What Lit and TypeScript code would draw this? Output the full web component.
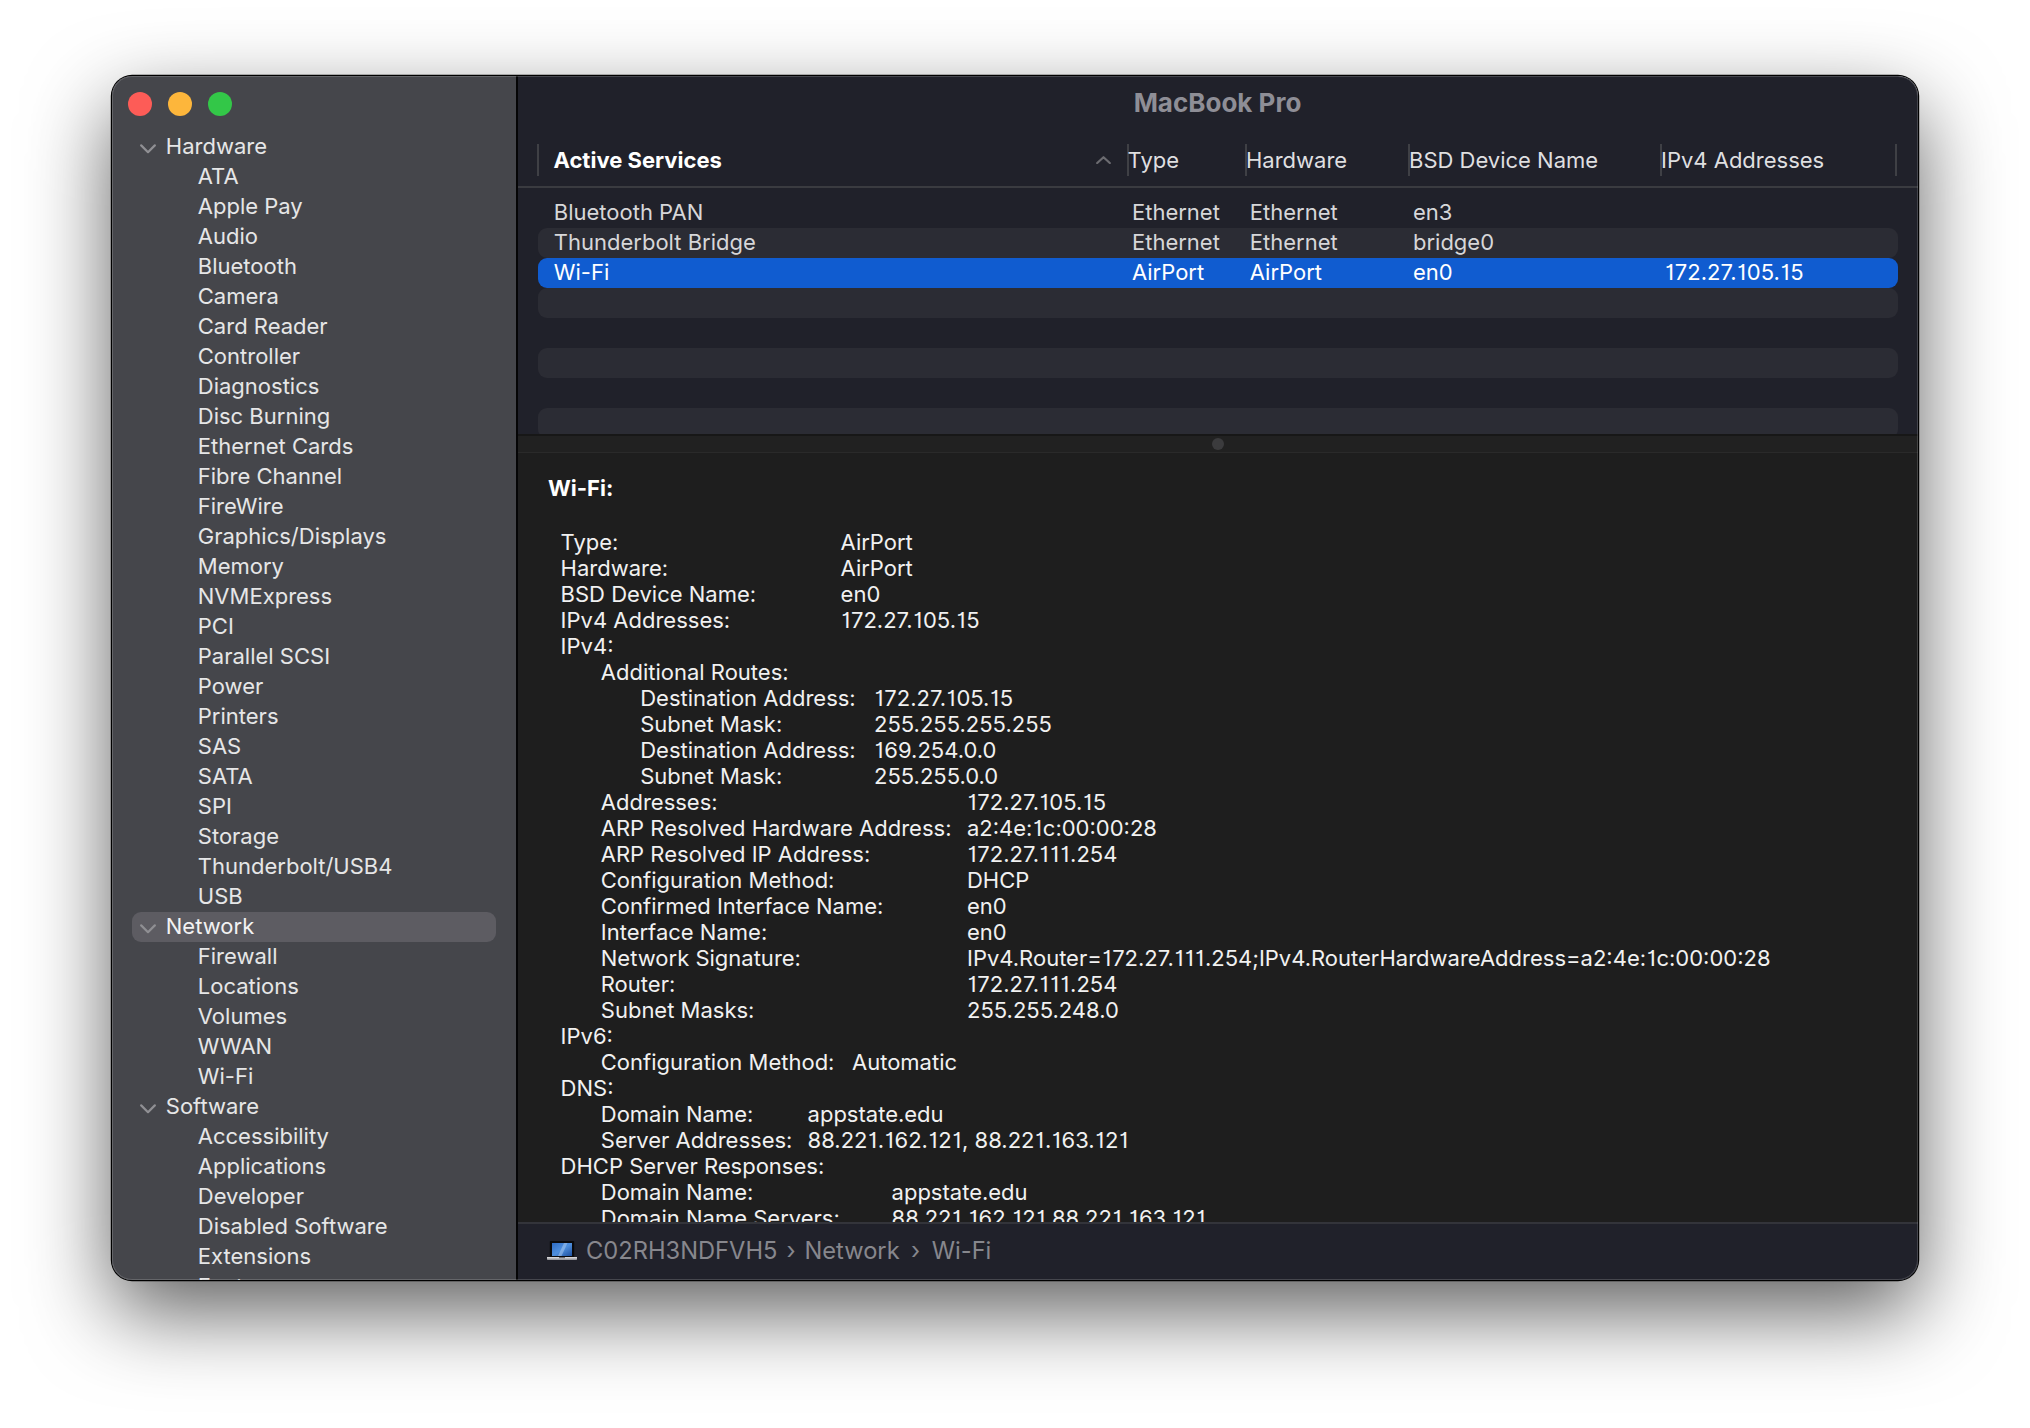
import { LitElement, html, css, svg } from "lit";
import { customElement } from "lit/decorators.js";

type Side = { t: string; h?: boolean; sel?: boolean };
const group = (t: string, items: string[], sel = false): Side[] => [
  { t, h: true, sel },
  ...items.map((x) => ({ t: x })),
];
const SIDEBAR: Side[] = [
  ...group("Hardware", ["ATA","Apple Pay","Audio","Bluetooth","Camera","Card Reader","Controller","Diagnostics","Disc Burning","Ethernet Cards","Fibre Channel","FireWire","Graphics/Displays","Memory","NVMExpress","PCI","Parallel SCSI","Power","Printers","SAS","SATA","SPI","Storage","Thunderbolt/USB4","USB"]),
  ...group("Network", ["Firewall","Locations","Volumes","WWAN","Wi-Fi"], true),
  ...group("Software", ["Accessibility","Applications","Developer","Disabled Software","Extensions","Fonts"]),
];

const HEAD = [
  { t: "Active Services", w: 589.6 },
  { t: "Type", w: 118.4 },
  { t: "Hardware", w: 163 },
  { t: "BSD Device Name", w: 252 },
  { t: "IPv4 Addresses", w: 237 },
];

const ROWS: { c: string[]; cls: string }[] = [
  { c: ["Bluetooth PAN", "Ethernet", "Ethernet", "en3", ""], cls: "" },
  { c: ["Thunderbolt Bridge", "Ethernet", "Ethernet", "bridge0", ""], cls: "stripe" },
  { c: ["Wi-Fi", "AirPort", "AirPort", "en0", "172.27.105.15"], cls: "selected" },
  { c: ["", "", "", "", ""], cls: "stripe" },
  { c: ["", "", "", "", ""], cls: "" },
  { c: ["", "", "", "", ""], cls: "stripe" },
  { c: ["", "", "", "", ""], cls: "" },
  { c: ["", "", "", "", ""], cls: "stripe" },
];

// Label column width = tab stop of the value, measured from the row's indent.
const INDENT = [0, 40.2, 79.6];
const D: [number, string, string, number][] = [
  [0, "Type:", "AirPort", 280],
  [0, "Hardware:", "AirPort", 280],
  [0, "BSD Device Name:", "en0", 280],
  [0, "IPv4 Addresses:", "172.27.105.15", 280],
  [0, "IPv4:", "", 0],
  [1, "Additional Routes:", "", 0],
  [2, "Destination Address:", "172.27.105.15", 313.4],
  [2, "Subnet Mask:", "255.255.255.255", 313.4],
  [2, "Destination Address:", "169.254.0.0", 313.4],
  [2, "Subnet Mask:", "255.255.0.0", 313.4],
  [1, "Addresses:", "172.27.105.15", 406.4],
  [1, "ARP Resolved Hardware Address:", "a2:4e:1c:00:00:28", 406.4],
  [1, "ARP Resolved IP Address:", "172.27.111.254", 406.4],
  [1, "Configuration Method:", "DHCP", 406.4],
  [1, "Confirmed Interface Name:", "en0", 406.4],
  [1, "Interface Name:", "en0", 406.4],
  [1, "Network Signature:", "IPv4.Router=172.27.111.254;IPv4.RouterHardwareAddress=a2:4e:1c:00:00:28", 406.4],
  [1, "Router:", "172.27.111.254", 406.4],
  [1, "Subnet Masks:", "255.255.248.0", 406.4],
  [0, "IPv6:", "", 0],
  [1, "Configuration Method:", "Automatic", 291.4],
  [0, "DNS:", "", 0],
  [1, "Domain Name:", "appstate.edu", 247],
  [1, "Server Addresses:", "88.221.162.121, 88.221.163.121", 247],
  [0, "DHCP Server Responses:", "", 0],
  [1, "Domain Name:", "appstate.edu", 331],
  [1, "Domain Name Servers:", "88.221.162.121,88.221.163.121", 331],
];

// The digit "1" is narrower here than in the reference's face: give it side room.
const withOnes = (s: string) =>
  s.split(/(1)/).map((p) => (p === "1" ? html`<span class="one">1</span>` : p));

const chevron = svg`<svg class="chev" viewBox="0 0 16 10" width="16" height="10"><path d="M1.2 1.4 8 8.2l6.8-6.8" fill="none" stroke="currentColor" stroke-width="2.2" stroke-linecap="round" stroke-linejoin="round"/></svg>`;
const caret = svg`<svg class="caret" viewBox="0 0 15 8" width="15" height="8"><path d="M1.2 7 7.5 1.2 13.8 7" fill="none" stroke="currentColor" stroke-width="2.2" stroke-linecap="round" stroke-linejoin="round"/></svg>`;
const laptop = svg`<svg class="laptop" viewBox="0 0 30 19" width="30" height="19">
  <defs>
    <linearGradient id="scr" x1="0" y1="0" x2="1" y2="1"><stop offset="0" stop-color="#2d6bc4"/><stop offset=".5" stop-color="#4f8fdc"/><stop offset="1" stop-color="#1d4f9e"/></linearGradient>
    <linearGradient id="base" x1="0" y1="0" x2="0" y2="1"><stop offset="0" stop-color="#e4e4e6"/><stop offset="1" stop-color="#8a8a8e"/></linearGradient>
  </defs>
  <path d="M3.6 0h22.8a.8.8 0 0 1 .8.8V16H2.8V.8a.8.8 0 0 1 .8-.8z" fill="#0a0a0c"/>
  <rect x="5" y="2" width="20" height="13" fill="url(#scr)"/>
  <path d="M11 15l6-13h3.5l-6 13z" fill="#a8c8ee" opacity=".55"/>
  <path d="M0 16h30v2.2a.8.8 0 0 1-.8.8H.8a.8.8 0 0 1-.8-.8z" fill="url(#base)"/>
  <rect x="12" y="16" width="6" height="1.2" fill="#6c6c70"/>
</svg>`;

@customElement("app-root")
export class AppRoot extends LitElement {
  static styles = css`
    :host {
      display: block;
      width: 2030px;
      height: 1428px;
      background: #fff;
      box-sizing: border-box;
      padding: 76px 112px 148px;
      font-family: Inter, "Liberation Sans", sans-serif;
      font-size: 22px;
      font-feature-settings: "cv01";
      overflow: hidden;
    }
    .window {
      position: relative;
      width: 1806px;
      height: 1204px;
      border-radius: 20px;
      overflow: hidden;
      display: flex;
      background: #20212a;
    }
    .frame-shadow {
      width: 1806px;
      height: 1204px;
      border-radius: 20px;
      box-shadow: 0 0 0 1.2px #000, 0 32px 84px rgba(0, 0, 0, 0.63);
    }
    .window::after {
      content: "";
      position: absolute;
      inset: 0;
      border-radius: 20px;
      border: 1.6px solid rgba(255, 255, 255, 0.17);
      pointer-events: none;
    }
    .one { padding: 0 0.8px; }
    /* sidebar */
    .sidebar {
      width: 404px;
      flex: none;
      background: #45464b;
      border-right: 2px solid #050506;
      overflow: hidden;
      color: #e6e6e7;
    }
    .lights {
      display: flex;
      gap: 16px;
      padding: 16px 0 16px 16px;
    }
    .light { width: 24px; height: 24px; border-radius: 50%; }
    .red { background: #fd5c57; }
    .yellow { background: #fdb63b; }
    .green { background: #33c748; }
    .side-row {
      height: 30px;
      line-height: 29px;
      margin: 0 20px;
      white-space: nowrap;
    }
    .side-row.item { padding-left: 65.8px; }
    .side-row.head {
      display: flex;
      align-items: center;
      padding-left: 8px;
      gap: 9.8px;
    }
    .side-row.head span { margin-bottom: 2px; }
    .side-row.sel { background: #5d5c62; border-radius: 9px; color: #f2f2f3; }
    .chev { color: #8f8f93; flex: none; margin-top: 3px; }

    /* main */
    .main { width: 1400px; flex: none; display: flex; flex-direction: column; }
    .title {
      height: 54px;
      line-height: 54px;
      text-align: center;
      font-size: 26px;
      font-weight: 700;
      color: #8e8e96;
      padding-right: 1px;
    }
    .table { height: 304px; overflow: hidden; display: flex; flex-direction: column; flex: none; }
    .thead {
      display: flex;
      padding: 14px 0 10px 19px;
      border-bottom: 2px solid #3a3b40;
      flex: none;
    }
    .th {
      height: 32px;
      line-height: 32px;
      box-sizing: border-box;
      border-left: 2px solid #3f4045;
      color: #dfdfe0;
      display: flex;
      justify-content: space-between;
      align-items: center;
      flex: none;
    }
    .th span { margin-left: -1px; }
    .th.first { padding-left: 15.5px; font-weight: 700; color: #fff; }
    .th.last { border-right: 2px solid #3f4045; }
    .caret { color: #6b6b70; margin-right: 16px; margin-top: -1px; }
    .tbody { padding: 10px 20px 0; }
    .tr {
      height: 30px;
      line-height: 29px;
      border-radius: 9px;
      display: grid;
      grid-template-columns: 578.2px 117.8px 163.2px 251.5px 1fr;
      padding-left: 15.8px;
      color: #d7d7d9;
    }
    .tr.stripe { background: #2b2c34; }
    .tr.selected { background: #105cd0; color: #fff; }

    .split {
      height: 19px;
      flex: none;
      box-sizing: border-box;
      background: #212121;
      border-top: 2px solid #171717;
      border-bottom: 1px solid #2a2a2a;
      display: flex;
      align-items: center;
      justify-content: center;
    }
    .dot { width: 12px; height: 12px; border-radius: 50%; background: #3b3b3d; }

    .detail {
      flex: 1;
      min-height: 0;
      overflow: hidden;
      background: #1e1e1e;
      color: #f1f1f1;
      padding: 22px 0 0 30px;
    }
    .detail h2 {
      margin: 0 0 28px;
      font: inherit;
      font-weight: 700;
      line-height: 26px;
      color: #fff;
    }
    .lines { padding-left: 12.6px; }
    .line { display: flex; height: 26px; line-height: 26px; white-space: nowrap; }
    .line span:first-child { flex: none; }

    .footer {
      height: 58px;
      flex: none;
      box-sizing: border-box;
      border-top: 2px solid #33343a;
      background: #20212a;
      display: flex;
      align-items: center;
      padding: 0 0 4px 29px;
      color: #87878d;
      white-space: nowrap;
      font-size: 23.7px;
    }
    .laptop { flex: none; margin-right: 9px; }
    .sep { width: 27px; text-align: center; }
    .sep.b { width: 32px; }
  `;

  render() {
    return html`
      <div class="frame-shadow">
        <div class="window">
          <div class="sidebar">
            <div class="lights">
              <div class="light red"></div>
              <div class="light yellow"></div>
              <div class="light green"></div>
            </div>
            ${SIDEBAR.map((s) =>
              s.h
                ? html`<div class="side-row head ${s.sel ? "sel" : ""}">${chevron}<span>${s.t}</span></div>`
                : html`<div class="side-row item">${s.t}</div>`
            )}
          </div>
          <div class="main">
            <div class="title">MacBook Pro</div>
            <div class="table">
              <div class="thead">
                ${HEAD.map(
                  (h, i) => html`<div
                    class="th ${i === 0 ? "first" : ""} ${i === 4 ? "last" : ""}"
                    style="width:${h.w}px"
                  >
                    <span>${h.t}</span>${i === 0 ? caret : ""}
                  </div>`
                )}
              </div>
              <div class="tbody">
                ${ROWS.map(
                  (r) => html`<div class="tr ${r.cls}">${r.c.map((c) => html`<span>${withOnes(c)}</span>`)}</div>`
                )}
              </div>
            </div>
            <div class="split"><div class="dot"></div></div>
            <div class="detail">
              <h2>Wi-Fi:</h2>
              <div class="lines">
                ${D.map(
                  ([lvl, label, value, tab]) => html`<div class="line" style="padding-left:${INDENT[lvl]}px">
                    <span style=${tab ? `width:${tab - INDENT[lvl]}px` : ""}>${label}</span><span>${withOnes(value)}</span>
                  </div>`
                )}
              </div>
            </div>
            <div class="footer">
              ${laptop}<span>C02RH3NDFVH5</span><span class="sep">›</span><span>Network</span><span class="sep b">›</span
              ><span>Wi-Fi</span>
            </div>
          </div>
        </div>
      </div>
    `;
  }
}
